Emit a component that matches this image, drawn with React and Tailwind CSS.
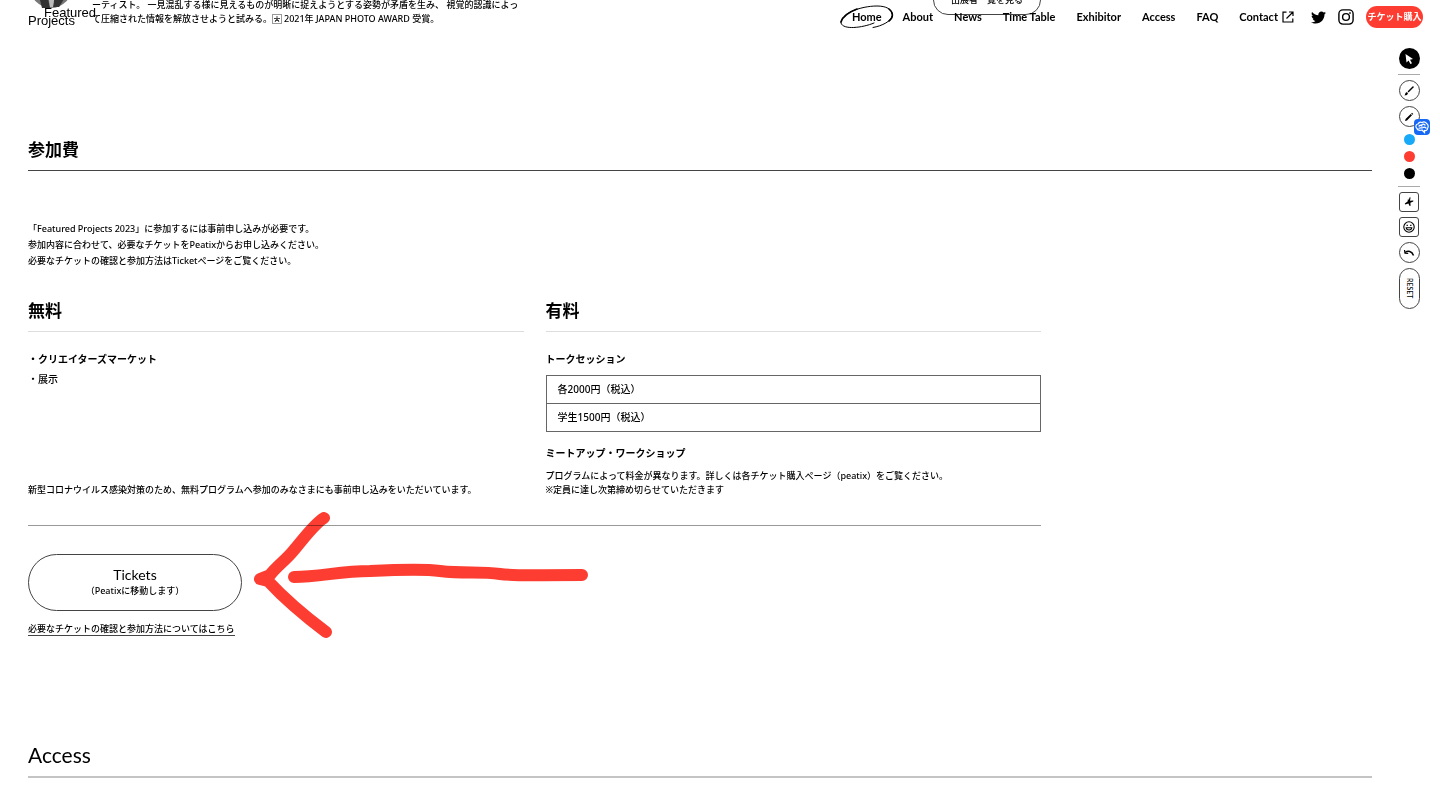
import { FaTwitter } from "react-icons/fa";

const NAV = ["About", "News", "Time Table", "Exhibitor", "Access", "FAQ"];

function Header() {
  return (
    <header className="absolute inset-x-0 top-0 z-20 flex h-[34px] items-center justify-between pl-7 pr-[17px]">
      <a href="#top" className="flex flex-col font-['Liberation_Sans',Arial,sans-serif] text-[13px] leading-[8px]">
        <span className="pl-4">Featured</span>
        <span>Projects</span>
      </a>
      <nav className="flex items-center gap-[21px] font-['Lato','Noto_Sans_CJK_JP',sans-serif] text-[11px] leading-4 font-bold">
        <a href="#home" className="relative">
          Home
          <svg className="absolute -left-3 -top-1 h-6 w-[54px]" viewBox="0 0 54 24" fill="none" stroke="#000" strokeLinecap="round" aria-hidden="true">
            <path d="M34 18C22 23 3 25 1 18C0 9 20 1 37 1C46 1 52 4 52.500 10C52 16 42 21 33 22.500" strokeWidth="1" />
            <path d="M1 17C3 11 9 7 17 4M49 4C54 8 53 13 49 16" strokeWidth="1.600" />
          </svg>
        </a>
        {NAV.map((n) => (
          <a key={n} href={"#" + n.toLowerCase().replace(" ", "-")}>{n}</a>
        ))}
        <a href="#contact" className="flex items-center gap-1">
          Contact
          <svg className="size-3" viewBox="0 0 12 12" fill="none" stroke="#000" strokeWidth="1.200" aria-hidden="true">
            <path d="M4.500 1.200H1V11H10.800V7.500M7 1H11V5M11 1L4.500 7.500" />
          </svg>
        </a>
        <div className="flex items-center gap-3">
          <a href="#twitter" aria-label="Twitter" className="-ml-1"><FaTwitter className="size-[15px]" /></a>
          <a href="#instagram" aria-label="Instagram">
            <svg className="size-4" viewBox="0 0 16 16" fill="none" stroke="#000" strokeWidth="1.400" aria-hidden="true">
              <rect x="0.900" y="0.900" width="14.200" height="14.200" rx="4" />
              <circle cx="8" cy="8" r="3.400" />
              <circle cx="12" cy="4" r="0.500" fill="#000" strokeWidth="0.800" />
            </svg>
          </a>
          <a href="#buy" className="flex h-[22px] w-[57px] items-center justify-center whitespace-nowrap rounded-full bg-[#fd3d31] text-[9px] font-bold text-white">
            チケット購入
          </a>
        </div>
      </nav>
    </header>
  );
}

function Toolbar() {
  const round = "flex size-[21px] shrink-0 items-center justify-center rounded-full border border-[#444] bg-white";
  const square = "flex size-5 shrink-0 items-center justify-center rounded-[3px] border border-[#444] bg-white";
  return (
    <aside aria-label="Drawing tools" className="absolute right-5 top-12 z-20 flex w-[22px] flex-col items-center gap-[5px]">
      <button aria-label="Pointer" className="flex size-[21px] shrink-0 items-center justify-center rounded-full bg-black">
        <svg className="size-3" viewBox="0 0 12 12" fill="#fff" aria-hidden="true">
          <path d="M2.500 1L10 6L7 6.800L9 10.200L7.400 11L5.600 7.600L3.500 9.600Z" />
        </svg>
      </button>
      <hr className="w-full border-[#aaa]" />
      <button aria-label="Brush" className={round}>
        <svg className="size-3" viewBox="0 0 12 12" aria-hidden="true">
          <path d="M10 2L5.500 6.500" stroke="#000" strokeWidth="1.500" strokeLinecap="round" />
          <path d="M1.500 10.500C2.200 9.800 2 8.600 3 7.600C4 6.800 5.400 8 4.700 9.100C4 10.300 2.600 10.500 1.500 10.500Z" />
        </svg>
      </button>
      <div className="relative flex">
        <button aria-label="Pencil" className={round}>
          <svg className="size-3" viewBox="0 0 12 12" aria-hidden="true">
            <path d="M2 10L2.600 8L7.700 3L9 4.300L4 9.400ZM8.200 2.500L9 1.700L10.300 3L9.500 3.800Z" />
          </svg>
        </button>
        <span className="absolute -right-[10px] top-[13px] flex size-4 items-center justify-center rounded-sm bg-[#1769f5]">
          <svg className="h-[13px] w-[14px]" viewBox="0 0 14 13" fill="none" stroke="#fff" strokeWidth="1.200" strokeLinecap="round" aria-hidden="true">
            <path d="M2 7.500C0 6 1 3 3 3C4 1 6 1 7 1.500C9 0.500 11 1 11.500 2.500C13.500 3.500 13.500 6 12.500 7.500C12.500 9 11 10 9.500 9.500L9.500 11.500L7 9C5 9.500 2.500 9.500 2 7.500ZM4 5C5 4 6 4 7 5M7 3.500C8 2.800 9 3 10 4M4 7.200C5.500 6.500 6.500 7.500 8 6.500C9 5.800 10 6 11 7" />
          </svg>
        </span>
      </div>
      <div className="flex flex-col gap-[6px] py-[2px]">
        <button aria-label="Blue" className="size-[11px] rounded-full bg-[#18a9f8]" />
        <button aria-label="Red" className="size-[11px] rounded-full bg-[#fd3d31]" />
        <button aria-label="Black" className="size-[11px] rounded-full bg-black" />
      </div>
      <hr className="w-full border-[#aaa]" />
      <button aria-label="Stamp" className={square}>
        <svg className="size-3" viewBox="0 0 12 12" aria-hidden="true">
          <path d="M7.600 1.500L7 4.800L10.300 4.600L10.300 5.600L7.400 6.700L7.600 9.800L6.600 10L5.400 7.400L2.200 8.400L1.800 7.400L4.600 5.600L5 2.600L5.800 4.200L6.600 1.300Z" />
        </svg>
      </button>
      <button aria-label="Emoji" className={square}>
        <svg className="size-3" viewBox="0 0 12 12" fill="none" stroke="#000" strokeWidth="1.100" aria-hidden="true">
          <circle cx="6" cy="6" r="5.200" />
          <path d="M3.200 6.800H8.800C8.400 9.800 3.600 9.800 3.200 6.800Z" />
          <path d="M4.200 3.800V5M7.800 3.800V5" strokeWidth="1.300" />
        </svg>
      </button>
      <button aria-label="Undo" className={round}>
        <svg className="size-3" viewBox="0 0 12 12" fill="none" stroke="#000" strokeWidth="1.500" aria-hidden="true">
          <path d="M2 5.500C5 3.500 9 4 10.500 8.500" />
          <path d="M1.500 3L2 6.200L5.200 6.300" strokeWidth="1.200" />
        </svg>
      </button>
      <button className="flex h-[41px] w-[21px] items-center justify-center rounded-full border border-[#444] bg-white">
        <span className="font-['Lato',sans-serif] text-[7px] font-medium leading-none [writing-mode:vertical-rl]">RESET</span>
      </button>
    </aside>
  );
}

function ArrowDrawing() {
  return (
    <svg className="pointer-events-none absolute left-[250px] top-[510px] h-[130px] w-[340px] mix-blend-multiply" viewBox="250 510 340 130" fill="none" stroke="#fd3d31" strokeWidth="12" strokeLinecap="round" strokeLinejoin="round" aria-hidden="true">
      <path d="M324 518C313 525 302 541 294 550C286 560 277 566 270 575L260 579L268 581C281 595 302 614 326 632" />
      <path d="M294 577C320 577 340 571 370 571C392 570 425 569 440 571C465 574 480 571 500 574C515 576 525 575 582 575" />
    </svg>
  );
}

export default function App() {
  return (
    <div lang="ja" className="relative min-h-screen overflow-hidden bg-white font-['Noto_Sans','Noto_Sans_CJK_JP',sans-serif] text-[9px] font-medium text-black">
      <Header />
      <Toolbar />
      <button className="absolute -top-[15px] right-[399px] flex h-[30px] w-[108px] items-center justify-center whitespace-nowrap rounded-full border border-[#444]">
        出展者一覧を見る
      </button>
      <main className="pl-7 pr-[68px]">
        <section className="relative -mt-[2px] pl-16 leading-[14px]">
          <svg className="absolute -top-8 left-[2px] size-[42px]" viewBox="0 0 42 42" aria-hidden="true">
            <circle cx="21" cy="21" r="21" fill="#777" />
            <path d="M9 30L17 28L20 42H12ZM25 28L34 33L29 41H23Z" fill="#333" />
            <path d="M18 28H25L23 41H20Z" fill="#bbb" />
          </svg>
          <p>ーティスト。 一見混乱する様に見えるものが明晰に捉えようとする姿勢が矛盾を生み、 視覚的認識によっ</p>
          <p className="flex items-center">
            て圧縮された情報を解放させようと試みる。
            <svg className="mr-[2px] size-[10px]" viewBox="0 0 10 10" fill="none" stroke="#333" aria-hidden="true">
              <rect x="0.500" y="0.500" width="9" height="9" strokeDasharray="1 1" />
              <path d="M5 2V4M2 4.500H8M3 8L5 5L7 8M3 6.500H7" strokeWidth="0.900" />
            </svg>
            2021年 JAPAN PHOTO AWARD 受賞。
          </p>
        </section>

        <section className="pt-28">
          <h2 className="border-b border-[#444] pb-2 text-[17px] font-bold leading-6">参加費</h2>
          <p className="pt-[50px] leading-4">
            「Featured Projects 2023」に参加するには事前申し込みが必要です。<br />
            参加内容に合わせて、必要なチケットをPeatixからお申し込みください。<br />
            必要なチケットの確認と参加方法はTicketページをご覧ください。
          </p>
          <div className="w-[1013px] max-w-full">
            <div className="grid grid-cols-2 gap-x-[22px] border-b border-[#999] pb-7 pt-[30px]">
              <div className="flex flex-col">
                <h3 className="border-b border-[#ddd] pb-2 text-[17px] font-bold leading-6">無料</h3>
                <ul className="pt-[17px] text-[10px] leading-5">
                  <li className="font-bold">・クリエイターズマーケット</li>
                  <li>・展示</li>
                </ul>
                <p className="mt-auto leading-[14px]">新型コロナウイルス感染対策のため、無料プログラムへ参加のみなさまにも事前申し込みをいただいています。</p>
              </div>
              <div>
                <h3 className="border-b border-[#ddd] pb-2 text-[17px] font-bold leading-6">有料</h3>
                <h4 className="pt-[17px] text-[10px] font-bold leading-5">トークセッション</h4>
                <table className="mt-[6px] w-full border-collapse text-[10px] leading-[17px]">
                  <tbody>
                    <tr><td className="border border-[#666] px-[11px] py-[5px]">各2000円（税込）</td></tr>
                    <tr><td className="border border-[#666] px-[11px] py-[5px]">学生1500円（税込）</td></tr>
                  </tbody>
                </table>
                <h4 className="pt-[11px] text-[10px] font-bold leading-5">ミートアップ・ワークショップ</h4>
                <p className="pt-[6px] leading-[14px]">
                  プログラムによって料金が異なります。詳しくは各チケット購入ページ（peatix）をご覧ください。<br />
                  ※定員に達し次第締め切らせていただきます
                </p>
              </div>
            </div>
          </div>
          <a href="#tickets" className="mt-7 flex h-[57px] w-[214px] flex-col items-center justify-center rounded-full border border-[#444]">
            <span className="font-['Lato',sans-serif] text-[14px] font-normal leading-4">Tickets</span>
            <span className="leading-4">（Peatixに移動します）</span>
          </a>
          <a href="#how-to" className="mt-3 inline-block border-b border-[#444] leading-3">必要なチケットの確認と参加方法についてはこちら</a>
        </section>

        <section className="pt-[107px]">
          <h2 className="border-b-2 border-[#c4c4c4] pb-[9px] font-['Lato',sans-serif] text-[21px] font-normal leading-6">Access</h2>
        </section>
      </main>
      <ArrowDrawing />
    </div>
  );
}
